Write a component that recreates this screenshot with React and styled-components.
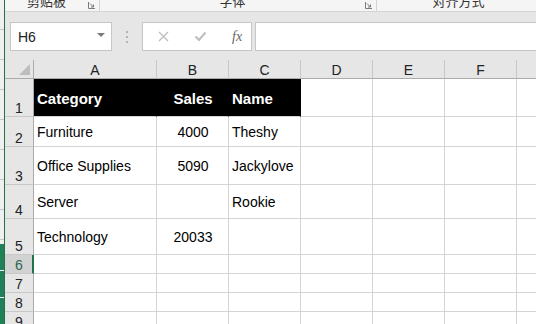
import React from "react"
import styled, { createGlobalStyle } from "styled-components"

const GlobalStyle = createGlobalStyle`
  html, body {
    margin: 0;
    padding: 0;
    overflow: hidden;
    background: #ffffff;
  }
  body {
    font-family: "Liberation Sans", Arial, sans-serif;
  }
`

const Page = styled.div`
  display: flex;
  width: 536px;
  height: 324px;
  overflow: hidden;
`

const LeftStrip = styled.div`
  width: 4px;
  display: flex;
  flex-direction: column;
  border-right: 1px solid #217346;
  background: #f0f0f0;
`

const StripTop = styled.div`
  flex: 1;
  background: repeating-linear-gradient(
    to bottom,
    #f0f0f0 0px,
    #f0f0f0 29px,
    #c8c8c8 29px,
    #c8c8c8 30px
  );
`

const StripBottom = styled.div`
  height: 80px;
  background: repeating-linear-gradient(
    to bottom,
    #21805a 0px,
    #21805a 26px,
    #ffffff 26px,
    #ffffff 27px
  );
`

const Main = styled.div`
  flex: 1;
  min-width: 0;
  display: flex;
  flex-direction: column;
  overflow: hidden;
`

const RibbonLabels = styled.div`
  height: 11px;
  display: flex;
  background: #f5f5f5;
  border-bottom: 1px solid #d4d4d4;
  overflow: hidden;
  flex-shrink: 0;
`

const RibbonGroup = styled.div`
  width: ${(p) => p.$width}px;
  flex-shrink: 0;
  display: flex;
  align-items: flex-start;
  border-right: 1px solid #d4d4d4;
  height: 11px;
  padding-right: 4px;
  box-sizing: border-box;
`

const GroupLabel = styled.div`
  flex: 1;
  text-align: center;
  font-family: "Noto Sans CJK SC", sans-serif;
  font-size: 13px;
  line-height: 13px;
  color: #333;
  margin-top: -6px;
  white-space: nowrap;
`

const Launcher = styled.svg`
  width: 7px;
  height: 7px;
  margin-top: 2px;
  flex-shrink: 0;
`

const FormulaArea = styled.div`
  height: 48px;
  flex-shrink: 0;
  display: flex;
  align-items: flex-start;
  background: #e6e6e6;
  padding: 10px 0 0 5px;
  box-sizing: border-box;
`

const Box = styled.div`
  height: 29px;
  box-sizing: border-box;
  background: #ffffff;
  border: 1px solid #c6c6c6;
  display: flex;
  align-items: center;
`

const NameBox = styled(Box)`
  width: 102px;
  padding: 0 6px 0 7px;
  justify-content: space-between;
  font-size: 14px;
  color: #222;
`

const DropArrow = styled.span`
  width: 0;
  height: 0;
  border-left: 4px solid transparent;
  border-right: 4px solid transparent;
  border-top: 4px solid #7a7a7a;
  margin-top: -3px;
`

const Grip = styled.div`
  width: 30px;
  height: 29px;
  display: flex;
  flex-direction: column;
  align-items: center;
  justify-content: center;
  gap: 3px;
  & > span {
    width: 2px;
    height: 2px;
    background: #b4b4b4;
  }
`

const FxBox = styled(Box)`
  width: 110px;
  padding: 0 0 0 14px;
  gap: 24px;
`

const FxIcon = styled.svg`
  width: 13px;
  height: 13px;
`

const FxText = styled.span`
  font-family: "Liberation Serif", "Times New Roman", serif;
  font-style: italic;
  font-size: 14px;
  color: #666;
  margin-left: 1px;
`

const FormulaInput = styled(Box)`
  flex: 1;
  margin-left: 3px;
  border-right: none;
`

const Grid = styled.div`
  display: grid;
  grid-template-columns: 29px 123px 72px 72px 72px 72px 72px 72px;
  grid-template-rows: 19px 38px 30px 38px 34px 36px 19px 19px 19px 19px;
  flex: 1;
  overflow: hidden;
`

const Corner = styled.div`
  background: #e6e6e6;
  border-right: 1px solid #ababab;
  border-bottom: 1px solid #ababab;
  display: flex;
  align-items: flex-end;
  justify-content: flex-end;
  padding: 0 3px 3px 0;
  box-sizing: border-box;
`

const SelectAll = styled.span`
  width: 0;
  height: 0;
  border-left: 11px solid transparent;
  border-bottom: 11px solid #bdbdbd;
`

const ColHead = styled.div`
  background: #e6e6e6;
  border-right: 1px solid #c8c8c8;
  border-bottom: 1px solid #ababab;
  display: flex;
  align-items: center;
  justify-content: center;
  font-size: 14px;
  color: #222;
  padding-top: 2px;
  box-sizing: border-box;
`

const RowHead = styled.div`
  background: ${(p) => (p.$active ? "#d2d2d2" : "#e6e6e6")};
  border-right: ${(p) => (p.$active ? "2px solid #217346" : "1px solid #ababab")};
  border-bottom: 1px solid #c8c8c8;
  display: flex;
  align-items: flex-end;
  justify-content: center;
  font-size: 14px;
  line-height: 16px;
  color: ${(p) => (p.$active ? "#2d6650" : "#222")};
  padding-left: ${(p) => (p.$active ? 1 : 0)}px;
  box-sizing: border-box;
`

const Cell = styled.div`
  background: ${(p) => (p.$head ? "#000000" : "#ffffff")};
  color: ${(p) => (p.$head ? "#ffffff" : "#000000")};
  font-weight: ${(p) => (p.$head ? 700 : 400)};
  font-size: ${(p) => (p.$head ? 15 : 14)}px;
  border-right: 1px solid ${(p) => (p.$head ? "#000000" : "#d4d4d4")};
  border-bottom: 1px solid #d4d4d4;
  display: flex;
  align-items: center;
  justify-content: ${(p) => (p.$center ? "center" : "flex-start")};
  padding: 1px 2px 0 3px;
  white-space: nowrap;
  overflow: hidden;
  box-sizing: border-box;
`

const columns = ["A", "B", "C", "D", "E", "F", "G"]

const rows = [
  { n: 1, head: true, cells: ["Category", "Sales", "Name"] },
  { n: 2, cells: ["Furniture", "4000", "Theshy"] },
  { n: 3, cells: ["Office Supplies", "5090", "Jackylove"] },
  { n: 4, cells: ["Server", "", "Rookie"] },
  { n: 5, cells: ["Technology", "20033", ""] },
  { n: 6, cells: [] },
  { n: 7, cells: [] },
  { n: 8, cells: [] },
  { n: 9, cells: [] },
]

function LauncherIcon() {
  return (
    <Launcher viewBox="0 0 7 7">
      <path d="M0.5 0 V6.5 H7" fill="none" stroke="#7a7a7a" strokeWidth="1" />
      <path d="M2 1.5 L5.5 5 M5.5 2.5 V5 H3" fill="none" stroke="#7a7a7a" strokeWidth="1" />
    </Launcher>
  )
}

export default function App() {
  return (
    <>
      <GlobalStyle />
      <Page>
        <LeftStrip>
          <StripTop />
          <StripBottom />
        </LeftStrip>
        <Main>
          <RibbonLabels>
            <RibbonGroup $width={95}>
              <GroupLabel>剪贴板</GroupLabel>
              <LauncherIcon />
            </RibbonGroup>
            <RibbonGroup $width={277}>
              <GroupLabel>字体</GroupLabel>
              <LauncherIcon />
            </RibbonGroup>
            <RibbonGroup $width={168}>
              <GroupLabel>对齐方式</GroupLabel>
            </RibbonGroup>
          </RibbonLabels>

          <FormulaArea>
            <NameBox>
              <span>H6</span>
              <DropArrow />
            </NameBox>
            <Grip>
              <span />
              <span />
              <span />
            </Grip>
            <FxBox>
              <FxIcon viewBox="0 0 13 13">
                <path d="M2 2 L11 11 M11 2 L2 11" stroke="#bdbdbd" strokeWidth="1.3" fill="none" />
              </FxIcon>
              <FxIcon viewBox="0 0 13 13">
                <path d="M1.5 6.5 L5 10 L11.5 2.5" stroke="#bdbdbd" strokeWidth="2" fill="none" />
              </FxIcon>
              <FxText>fx</FxText>
            </FxBox>
            <FormulaInput />
          </FormulaArea>

          <Grid>
            <Corner>
              <SelectAll />
            </Corner>
            {columns.map((c) => (
              <ColHead key={c}>{c}</ColHead>
            ))}
            {rows.map((r) => (
              <React.Fragment key={r.n}>
                <RowHead $active={r.n === 6}>{r.n}</RowHead>
                {columns.map((c, i) => (
                  <Cell key={c} $head={r.head && i < 3} $center={i === 1}>
                    {r.cells[i] || ""}
                  </Cell>
                ))}
              </React.Fragment>
            ))}
          </Grid>
        </Main>
      </Page>
    </>
  )
}
